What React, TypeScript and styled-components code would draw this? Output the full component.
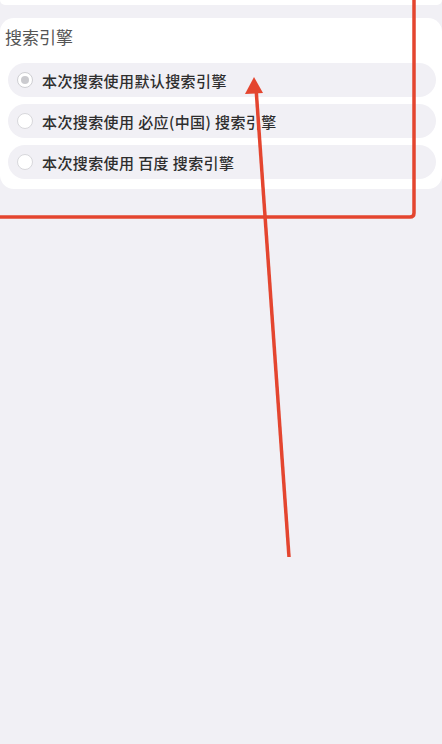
import React from 'react'
import styled, { createGlobalStyle } from 'styled-components'

const GlobalStyle = createGlobalStyle`
  html,
  body {
    margin: 0;
    padding: 0;
    background-color: #f1f0f5;
    font-family: 'Noto Sans CJK SC', 'Noto Sans', sans-serif;
  }
`

const Page = styled.div`
  position: relative;
  width: 442px;
  height: 744px;
  overflow: hidden;
  display: flex;
  flex-direction: column;
  gap: 13px;
`

const TopCard = styled.div`
  height: 5px;
  background-color: #ffffff;
  border-radius: 0 0 14px 14px;
`

const Card = styled.section`
  background-color: #ffffff;
  border-radius: 14px;
  padding: 10px 6px 10px 8px;
  display: flex;
  flex-direction: column;
`

const Title = styled.h3`
  margin: 0 0 17px -3px;
  font-size: 17px;
  line-height: 18px;
  font-weight: 400;
  color: #555555;
`

const List = styled.div`
  display: flex;
  flex-direction: column;
  gap: 7px;
`

const Row = styled.label`
  height: 34px;
  display: flex;
  align-items: center;
  gap: 9px;
  padding-left: 9px;
  border-radius: 17px;
  background-color: #f1f0f5;
  font-size: 15px;
  letter-spacing: 0.4px;
  font-weight: 500;
  color: #2e2e2e;
`

const Radio = styled.span<{ $checked?: boolean }>`
  box-sizing: border-box;
  width: 16px;
  height: 16px;
  border-radius: 50%;
  border: 1.5px solid ${p => (p.$checked ? '#cfcfd3' : '#d8d8dc')};
  background-color: #ffffff;
  display: flex;
  align-items: center;
  justify-content: center;

  &::after {
    content: '';
    display: ${p => (p.$checked ? 'block' : 'none')};
    width: 8px;
    height: 8px;
    border-radius: 50%;
    background-color: #cbcbcf;
  }
`

const Overlay = styled.svg`
  position: absolute;
  left: 0;
  top: 0;
  pointer-events: none;
`

const engines = [
  { label: '本次搜索使用默认搜索引擎', checked: true },
  { label: '本次搜索使用 必应(中国) 搜索引擎', checked: false },
  { label: '本次搜索使用 百度 搜索引擎', checked: false },
]

const App = () => (
  <Page>
    <GlobalStyle />
    <TopCard />
    <Card>
      <Title>搜索引擎</Title>
      <List>
        {engines.map(e => (
          <Row key={e.label}>
            <Radio $checked={e.checked} />
            {e.label}
          </Row>
        ))}
      </List>
    </Card>
    <Overlay width="442" height="744" viewBox="0 0 442 744">
      <path
        d="M414 -10 L414 213 Q414 217 410 217 L-10 217"
        fill="none"
        stroke="#e4452f"
        strokeWidth="3.5"
      />
      <line x1="289" y1="557" x2="256" y2="88" stroke="#e4452f" strokeWidth="3.5" />
      <polygon points="254,77 245,94 263,93" fill="#e4452f" />
    </Overlay>
  </Page>
)

export default App
